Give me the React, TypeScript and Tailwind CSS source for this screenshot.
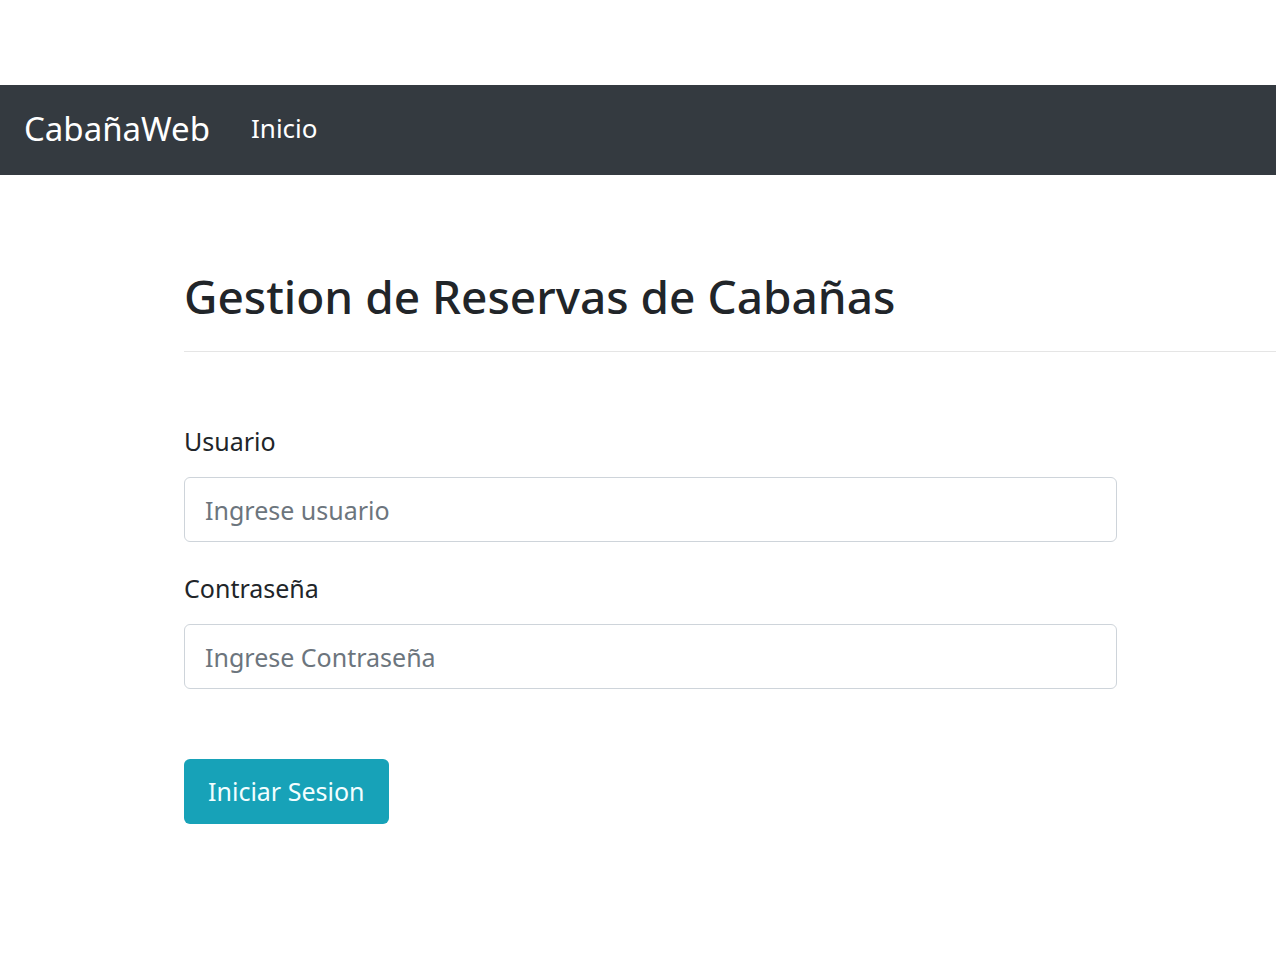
export default function App() {
  return (
    <div className="min-h-[960px] w-[1276px] bg-white pt-[85px] font-['Noto_Sans',sans-serif] text-[#212529]">
      <nav className="flex h-[90px] items-center bg-[#343a40] px-[24px] pb-[4px]">
        <span className="text-[33px] leading-none text-white">CabañaWeb</span>
        <a href="#" className="ml-[41px] text-[26px] leading-none text-white">
          Inicio
        </a>
      </nav>

      <main className="pl-[184px]">
        <h2 className="pt-[91px] text-[46px] font-medium leading-[60px]">
          Gestion de Reservas de Cabañas
        </h2>
        <hr className="mt-[25px] border-t border-[#e5e5e5]" />

        <form className="w-[933px] pt-[70px]">
          <label className="block text-[25px] leading-[38px]">Usuario</label>
          <input
            type="text"
            placeholder="Ingrese usuario"
            className="mt-[17px] h-[65px] w-full rounded-[6px] border border-[#ced4da] px-[20px] text-[25px] placeholder:text-[#6c757d]"
          />

          <label className="mt-[27px] block text-[25px] leading-[38px]">Contraseña</label>
          <input
            type="password"
            placeholder="Ingrese Contraseña"
            className="mt-[17px] h-[65px] w-full rounded-[6px] border border-[#ced4da] px-[20px] text-[25px] placeholder:text-[#6c757d]"
          />

          <button
            type="button"
            className="mt-[70px] h-[65px] rounded-[6px] bg-[#17a2b8] px-[24px] text-[25px] text-[#f2feff]"
          >
            Iniciar Sesion
          </button>
        </form>
      </main>
    </div>
  );
}
